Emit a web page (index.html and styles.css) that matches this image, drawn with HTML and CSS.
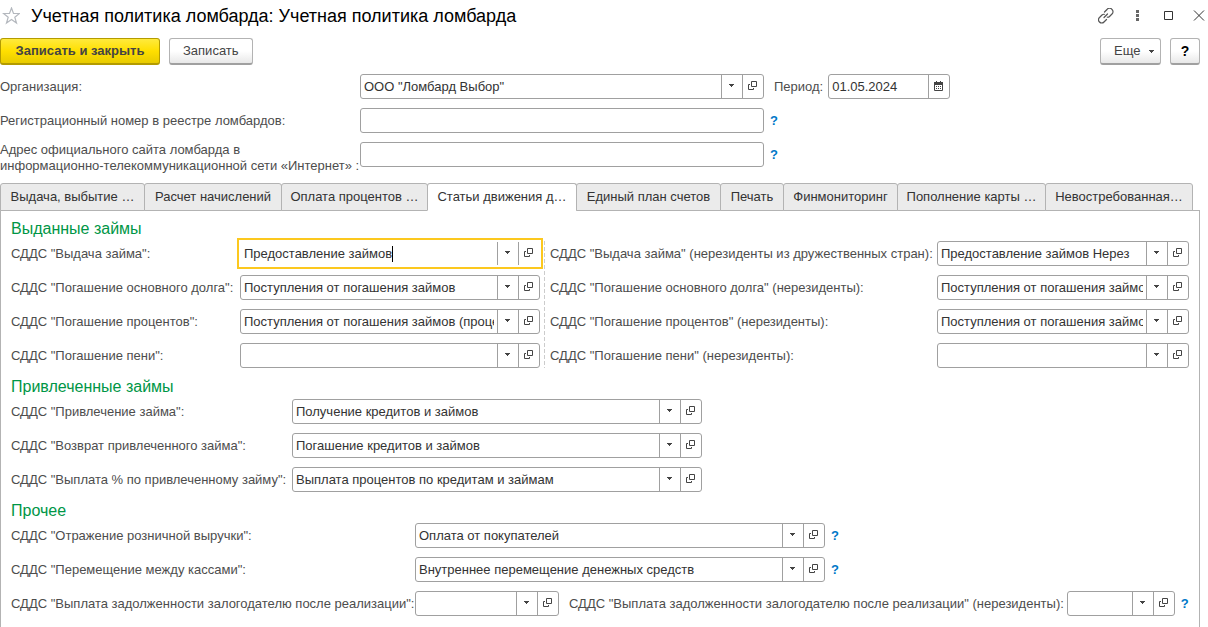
FILE: index.html
```html
<!DOCTYPE html>
<html lang="ru">
<head>
<meta charset="utf-8">
<title>Учетная политика ломбарда</title>
<link rel="stylesheet" href="styles.css">
</head>
<body>
<svg class="defs" aria-hidden="true">
  <symbol id="arrow" viewBox="0 0 5 3"><path d="M0 0H5V1H4V2H3V3H2V2H1V1H0Z" fill="#444"/></symbol>
  <symbol id="open" viewBox="0 0 9 9"><path d="M3.5 .5H8.5V5.5H3.5ZM2 3.5H.5V8.5H5.5V7" fill="none" stroke="#444"/></symbol>
</svg>

<header class="titlebar">
  <button class="icon-btn" aria-label="В избранное"><svg width="18" height="18" viewBox="0 0 18 18"><path d="M9.500 1L11.500 6.500H17.500L12.800 10.200L14.500 16L9.500 12.500L4.500 16L6.200 10.200L1.500 6.500H7.500Z" fill="none" stroke="#b4b8be" stroke-width="1.200"/></svg></button>
  <h1 class="title">Учетная политика ломбарда: Учетная политика ломбарда</h1>
  <div class="window-tools">
    <button class="icon-btn" aria-label="Ссылка"><svg width="16" height="16" viewBox="0 0 16 16"><g fill="none" stroke="#555" stroke-width="1.200" stroke-linecap="round"><path d="M6.500 4L9 1.500A3 3 0 0 1 14 1.500A3 3 0 0 1 14 6L11.500 8.500C11 9 10 9.300 9.300 9.200"/><path d="M8.500 11.500L6 14A3 3 0 0 1 1.500 14A3 3 0 0 1 1.500 9.500L4 7C4.500 6.500 5.500 6.200 6.200 6.300"/><path d="M6 9.500L9.500 6"/></g></svg></button>
    <button class="icon-btn" aria-label="Меню"><svg width="16" height="16" viewBox="0 0 16 16"><path d="M7 2H10V5H7ZM7 6H10V9H7ZM7 10H10V13H7Z" fill="#666"/></svg></button>
    <button class="icon-btn" aria-label="Развернуть"><svg width="16" height="16" viewBox="0 0 16 16"><path d="M4.500 3.500H12.500V11.500H4.500Z" fill="none" stroke="#333"/></svg></button>
    <button class="icon-btn" aria-label="Закрыть"><svg width="16" height="16" viewBox="0 0 16 16"><path d="M3 2.500L13 12.500M13 2.500L3 12.500" fill="none" stroke="#333"/></svg></button>
  </div>
</header>

<div class="commands">
  <button class="btn btn-primary">Записать и закрыть</button>
  <button class="btn">Записать</button>
  <span class="spacer"></span>
  <button class="btn btn-more">Еще <svg width="5" height="3"><use href="#arrow"/></svg></button>
  <button class="btn btn-help">?</button>
</div>

<div class="main-form">
  <label for="org">Организация:</label>
  <div class="line">
    <div class="field w-404"><input id="org" value='ООО "Ломбард Выбор"'><button aria-label="Выбрать"><svg width="5" height="3"><use href="#arrow"/></svg></button><button aria-label="Открыть"><svg width="9" height="9"><use href="#open"/></svg></button></div>
    <label for="period" class="period">Период:</label>
    <div class="field w-date"><input id="period" value="01.05.2024"><button aria-label="Календарь"><svg width="11" height="10" viewBox="0 0 11 10"><path d="M1.500 2.500H9.500V9.500H1.500Z" fill="none" stroke="#444"/><path d="M1 1H10V4H1ZM3 0H4V1H3ZM7 0H8V1H7ZM3 5H4V6H3ZM5 5H6V6H5ZM7 5H8V6H7ZM3 7H4V8H3ZM5 7H6V8H5ZM7 7H8V8H7Z" fill="#444"/></svg></button></div>
  </div>
  <label for="reg">Регистрационный номер в реестре ломбардов:</label>
  <div class="line"><div class="field w-404"><input id="reg"></div><a class="hint" href="#">?</a></div>
  <label for="site" class="two-line">Адрес официального сайта ломбарда в<br>информационно-телекоммуникационной сети «Интернет» :</label>
  <div class="line"><div class="field w-404"><input id="site"></div><a class="hint" href="#">?</a></div>
</div>

<div class="tabs" role="tablist">
  <button role="tab" class="tab">Выдача, выбытие …</button>
  <button role="tab" class="tab">Расчет начислений</button>
  <button role="tab" class="tab">Оплата процентов …</button>
  <button role="tab" class="tab active" aria-selected="true">Статьи движения д…</button>
  <button role="tab" class="tab">Единый план счетов</button>
  <button role="tab" class="tab">Печать</button>
  <button role="tab" class="tab">Финмониторинг</button>
  <button role="tab" class="tab">Пополнение карты …</button>
  <button role="tab" class="tab">Невостребованная…</button>
</div>

<main class="panel">
  <h2>Выданные займы</h2>
  <div class="issued">
    <div class="pairs pairs-left">
      <label for="a1">СДДС "Выдача займа":</label>
      <div class="field focused"><div class="editing"><input id="a1" value="Предоставление займов"><span class="caret"></span></div><button aria-label="Выбрать"><svg width="5" height="3"><use href="#arrow"/></svg></button><button aria-label="Открыть"><svg width="9" height="9"><use href="#open"/></svg></button></div>
      <label for="a2">СДДС "Погашение основного долга":</label>
      <div class="field"><input id="a2" value="Поступления от погашения займов"><button aria-label="Выбрать"><svg width="5" height="3"><use href="#arrow"/></svg></button><button aria-label="Открыть"><svg width="9" height="9"><use href="#open"/></svg></button></div>
      <label for="a3">СДДС "Погашение процентов":</label>
      <div class="field"><input id="a3" value="Поступления от погашения займов (проценты)"><button aria-label="Выбрать"><svg width="5" height="3"><use href="#arrow"/></svg></button><button aria-label="Открыть"><svg width="9" height="9"><use href="#open"/></svg></button></div>
      <label for="a4">СДДС "Погашение пени":</label>
      <div class="field"><input id="a4"><button aria-label="Выбрать"><svg width="5" height="3"><use href="#arrow"/></svg></button><button aria-label="Открыть"><svg width="9" height="9"><use href="#open"/></svg></button></div>
    </div>
    <div class="divider"></div>
    <div class="pairs pairs-right">
      <label for="b1">СДДС "Выдача займа" (нерезиденты из дружественных стран):</label>
      <div class="field"><input id="b1" value="Предоставление займов Нерез"><button aria-label="Выбрать"><svg width="5" height="3"><use href="#arrow"/></svg></button><button aria-label="Открыть"><svg width="9" height="9"><use href="#open"/></svg></button></div>
      <label for="b2">СДДС "Погашение основного долга" (нерезиденты):</label>
      <div class="field"><input id="b2" value="Поступления от погашения займов"><button aria-label="Выбрать"><svg width="5" height="3"><use href="#arrow"/></svg></button><button aria-label="Открыть"><svg width="9" height="9"><use href="#open"/></svg></button></div>
      <label for="b3">СДДС "Погашение процентов" (нерезиденты):</label>
      <div class="field"><input id="b3" value="Поступления от погашения займов"><button aria-label="Выбрать"><svg width="5" height="3"><use href="#arrow"/></svg></button><button aria-label="Открыть"><svg width="9" height="9"><use href="#open"/></svg></button></div>
      <label for="b4">СДДС "Погашение пени" (нерезиденты):</label>
      <div class="field"><input id="b4"><button aria-label="Выбрать"><svg width="5" height="3"><use href="#arrow"/></svg></button><button aria-label="Открыть"><svg width="9" height="9"><use href="#open"/></svg></button></div>
    </div>
  </div>

  <h2>Привлеченные займы</h2>
  <div class="pairs pairs-raised">
    <label for="c1">СДДС "Привлечение займа":</label>
    <div class="field w-410"><input id="c1" value="Получение кредитов и займов"><button aria-label="Выбрать"><svg width="5" height="3"><use href="#arrow"/></svg></button><button aria-label="Открыть"><svg width="9" height="9"><use href="#open"/></svg></button></div>
    <label for="c2">СДДС "Возврат привлеченного займа":</label>
    <div class="field w-410"><input id="c2" value="Погашение кредитов и займов"><button aria-label="Выбрать"><svg width="5" height="3"><use href="#arrow"/></svg></button><button aria-label="Открыть"><svg width="9" height="9"><use href="#open"/></svg></button></div>
    <label for="c3">СДДС "Выплата % по привлеченному займу":</label>
    <div class="field w-410"><input id="c3" value="Выплата процентов по кредитам и займам"><button aria-label="Выбрать"><svg width="5" height="3"><use href="#arrow"/></svg></button><button aria-label="Открыть"><svg width="9" height="9"><use href="#open"/></svg></button></div>
  </div>

  <h2>Прочее</h2>
  <div class="pairs pairs-other">
    <label for="d1">СДДС "Отражение розничной выручки":</label>
    <div class="line"><div class="field w-410"><input id="d1" value="Оплата от покупателей"><button aria-label="Выбрать"><svg width="5" height="3"><use href="#arrow"/></svg></button><button aria-label="Открыть"><svg width="9" height="9"><use href="#open"/></svg></button></div><a class="hint" href="#">?</a></div>
    <label for="d2">СДДС "Перемещение между кассами":</label>
    <div class="line"><div class="field w-410"><input id="d2" value="Внутреннее перемещение денежных средств"><button aria-label="Выбрать"><svg width="5" height="3"><use href="#arrow"/></svg></button><button aria-label="Открыть"><svg width="9" height="9"><use href="#open"/></svg></button></div><a class="hint" href="#">?</a></div>
    <label for="d3">СДДС "Выплата задолженности залогодателю после реализации":</label>
    <div class="line">
      <div class="field w-144"><input id="d3"><button aria-label="Выбрать"><svg width="5" height="3"><use href="#arrow"/></svg></button><button aria-label="Открыть"><svg width="9" height="9"><use href="#open"/></svg></button></div>
      <label for="d4" class="second">СДДС "Выплата задолженности залогодателю после реализации" (нерезиденты):</label>
      <div class="field w-108"><input id="d4"><button aria-label="Выбрать"><svg width="5" height="3"><use href="#arrow"/></svg></button><button aria-label="Открыть"><svg width="9" height="9"><use href="#open"/></svg></button></div>
      <a class="hint" href="#">?</a>
    </div>
  </div>
</main>
</body>
</html>
```
FILE: styles.css
```css
* { box-sizing: border-box; }
html { height: 100%; }
body {
  margin: 0;
  min-height: 100%;
  display: flex;
  flex-direction: column;
  background: #fff;
  color: #4d4d4d;
  font: 13px/16px "Liberation Sans", Arial, sans-serif;
  overflow: hidden;
}
button, input { font: inherit; color: inherit; margin: 0; }
svg { display: block; }
.defs { position: absolute; width: 0; height: 0; }

.titlebar { display: flex; align-items: center; height: 32px; padding: 0 1px 0 2px; }
.icon-btn { border: 0; padding: 0; background: none; }
.title { margin: 0 0 0 11px; font-size: 18px; line-height: 24px; font-weight: 400; color: #000; }
.window-tools { display: flex; gap: 15px; margin-left: auto; }

.commands { display: flex; gap: 9px; margin: 6px 8px 0 0; }
.spacer { flex: 1; }
.btn {
  height: 27px;
  padding: 0 13px;
  border: 1px solid #b3b3b3;
  border-bottom: 2px solid #a0a0a0;
  border-radius: 3px;
  background: linear-gradient(#fff 50%, #e8e8e8);
  color: #444;
  white-space: nowrap;
}
.btn-primary {
  width: 160px;
  border-color: #b39b00;
  background: linear-gradient(#ffea3d, #ffdf00 50%, #e8cb00);
  font-weight: 700;
}
.btn-more { display: flex; align-items: center; justify-content: space-between; width: 61px; padding: 0 6px 0 13px; }
.btn-help { width: 30px; padding: 0; font-size: 14px; font-weight: 700; color: #000; }

.main-form {
  display: grid;
  grid-template-columns: 360px 1fr;
  grid-auto-rows: 25px;
  row-gap: 9px;
  align-items: center;
  margin-top: 9px;
}
label { white-space: nowrap; }
.two-line { align-self: start; }
.line { display: flex; align-items: center; }
.period { margin: 0 5px 0 10px; }
.second { margin: 0 3px 0 10px; }
.hint { margin-left: 6px; font-weight: 700; color: #0078c8; text-decoration: none; }

.field {
  display: flex;
  height: 25px;
  border: 1px solid #a0a0a0;
  border-radius: 3px;
  background: #fff;
  color: #333;
}
.field input {
  flex: 1;
  min-width: 0;
  padding: 0;
  margin: 0 3px;
  border: 0;
  outline: 0;
  background: none;
}
.field button {
  flex: none;
  display: flex;
  align-items: center;
  justify-content: center;
  width: 21px;
  padding: 0 1px 2px 0;
  border: 0;
  border-left: 1px solid #a0a0a0;
  background: none;
}
.focused { border-color: transparent; border-radius: 0; outline: 2px solid #fcc81e; outline-offset: 1px; }
.editing { flex: 1; min-width: 0; display: flex; align-items: center; }
.editing input { flex: none; field-sizing: content; margin-right: 0; }
.caret { width: 1px; height: 16px; background: #000; }
.w-410 { width: 410px; }
.w-404 { width: 404px; }
.w-date { width: 122px; }
.w-144 { width: 144px; }
.w-108 { width: 108px; }

.tabs {
  display: grid;
  grid-template-columns: 144fr 137fr 146fr 149fr 144fr 63fr 114fr 148fr 147fr;
  margin: 16px 16px 0 0;
  z-index: 1;
}
.tab {
  height: 28px;
  margin-right: -1px;
  padding: 0;
  border: 1px solid #b3b3b3;
  border-radius: 3px 3px 0 0;
  background: #ebebeb;
  color: #333;
  white-space: nowrap;
}
.tab.active { border-bottom-color: #fff; background: #fff; }
.panel {
  flex: 1;
  margin: -1px 8px 0 0;
  padding: 0 10px;
  border: 1px solid #b3b3b3;
  border-width: 1px 1px 0;
}
h2 { margin: 0; padding: 9px 0 2px; font-size: 16px; line-height: 20px; font-weight: 400; color: #009646; }
h2:first-child { padding-top: 8px; }
.issued { display: grid; grid-template-columns: minmax(0, 529fr) 10px minmax(0, 639fr); }
.divider { width: 1px; margin-left: 4px; background: repeating-linear-gradient(#ccc 0 4px, transparent 4px 6px); }
.pairs { display: grid; grid-auto-rows: 25px; row-gap: 9px; align-items: center; }
.pairs-left { grid-template-columns: 229px minmax(0, 1fr); }
.pairs-right { grid-template-columns: 387px minmax(0, 1fr); }
.pairs-raised { grid-template-columns: 281px 1fr; }
.pairs-other { grid-template-columns: 404px 1fr; }
```
